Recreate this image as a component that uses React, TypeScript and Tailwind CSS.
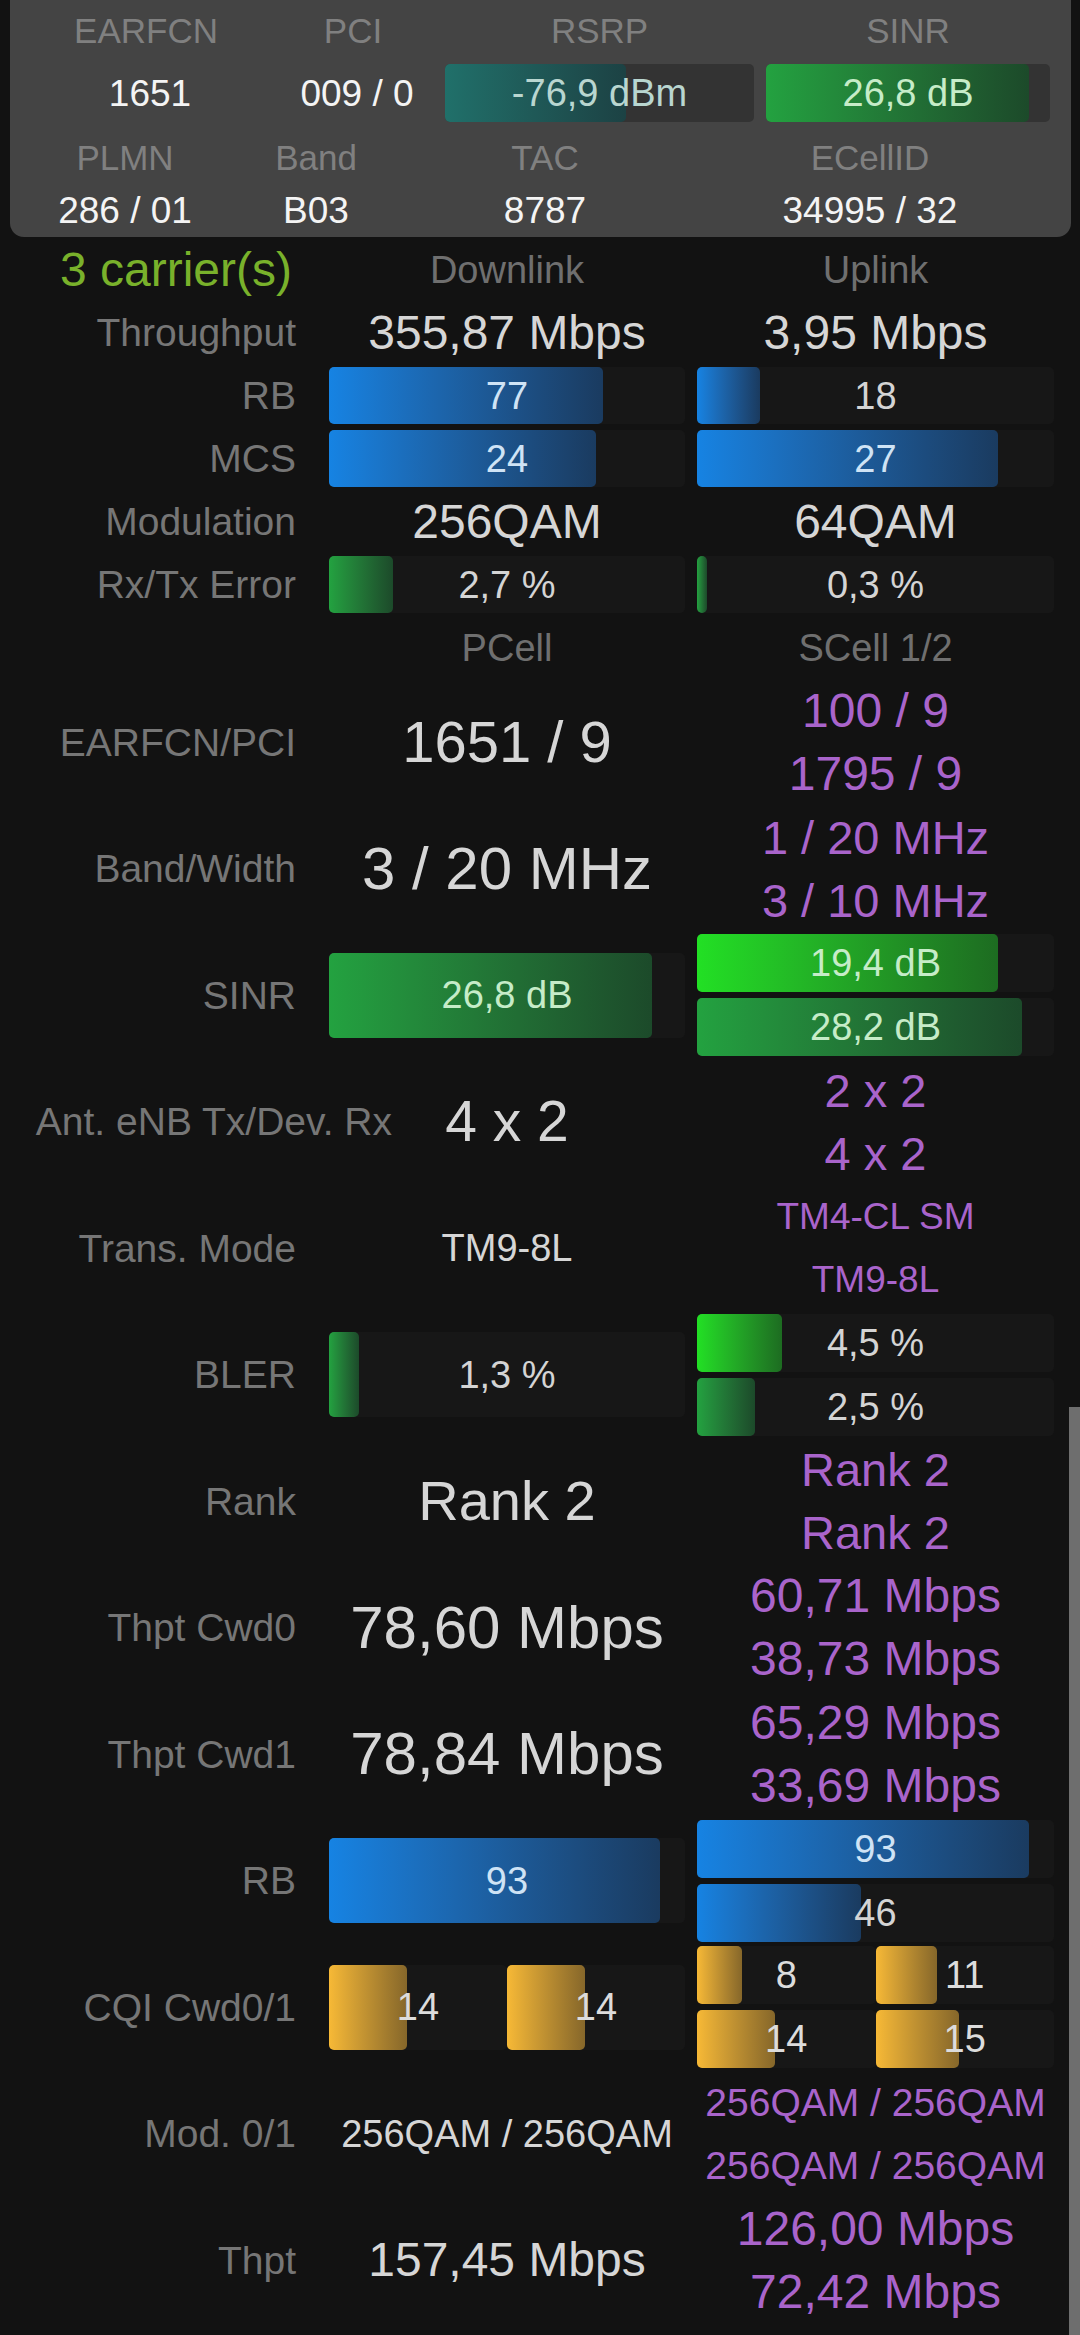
import React from "react";

const BLUE = "bg-linear-to-r from-[#1683e3] to-[#1a3b60]";
const GREEN = "bg-linear-to-r from-[#23a240] to-[#1c4a2a]";
const LIME = "bg-linear-to-r from-[#22e024] to-[#1d6c21]";
const GOLD = "bg-linear-to-r from-[#f7b936] to-[#86672a]";
const TEAL = "bg-linear-to-r from-[#20706a] to-[#1c4244]";

type BarProps = {
  pct: number;
  text: string;
  fill: string;
  h: string;
  tc?: string;
  track?: string;
};

function Bar({ pct, text, fill, h, tc = "text-[#d4d4d4]", track = "bg-[#171717]" }: BarProps) {
  return (
    <div className={`relative flex w-full items-center justify-center rounded-[5px] ${h} ${track}`}>
      <div className={`absolute top-0 left-0 h-full rounded-[5px] ${fill}`} style={{ width: `${pct}%` }} />
      <span className={`relative text-[38px] ${tc}`}>{text}</span>
    </div>
  );
}

// label column + downlink/pcell column + uplink/scell column
function Row({ label, a, b, tall, wide }: { label: React.ReactNode; a?: React.ReactNode; b?: React.ReactNode; tall?: boolean; wide?: boolean }) {
  return (
    <div className={`flex items-center ${tall ? "h-[126.5px]" : "h-[63px]"}`}>
      <div className="flex w-[296px] shrink-0 justify-end text-[39px] text-[#767676]">
        <span className={`whitespace-nowrap ${wide ? "-mr-[96px]" : ""}`}>{label}</span>
      </div>
      <div className="ml-[33px] flex w-[356px] shrink-0 items-center justify-center">{a}</div>
      <div className="ml-[12px] flex w-[357px] shrink-0 items-center justify-center">{b}</div>
    </div>
  );
}

function Pair({ items, size }: { items: string[]; size: string }) {
  return (
    <div className="flex w-full flex-col">
      {items.map((t, i) => (
        <div key={i} className={`flex h-[63px] items-center justify-center whitespace-nowrap text-[#a964cb] ${size}`}>
          {t}
        </div>
      ))}
    </div>
  );
}

function BarPair({ children }: { children: React.ReactNode }) {
  return <div className="flex w-full flex-col gap-[6px]">{children}</div>;
}

function Cqi({ left, right, h }: { left: number; right: number; h: string }) {
  return (
    <div className="grid w-full grid-cols-2">
      <Bar pct={(left / 32) * 100} text={String(left)} fill={GOLD} h={h} tc="text-[#dcdcdc]" />
      <Bar pct={(right / 32) * 100} text={String(right)} fill={GOLD} h={h} tc="text-[#dcdcdc]" />
    </div>
  );
}

const V = "text-[#d6d6d6]";

export default function App() {
  return (
    <div className="relative min-h-[2335px] w-[1080px] overflow-hidden bg-[#121212] font-['Liberation_Sans',Arial,sans-serif] leading-none">
      {/* Top summary panel */}
      <div className="ml-[10px] h-[237px] w-[1061px] rounded-b-[14px] bg-[#444444]">
        <div className="flex h-[60px] items-center text-[35px] text-[#808080]">
          <div className="w-[272px] text-center">EARFCN</div>
          <div className="w-[142px] text-center">PCI</div>
          <div className="ml-[21px] w-[309px] text-center">RSRP</div>
          <div className="ml-[12px] w-[284px] text-center">SINR</div>
        </div>
        <div className="mt-[4px] flex h-[58px] items-center text-[37px] text-[#f4f4f4]">
          <div className="w-[280px] text-center">1651</div>
          <div className="w-[134px] text-center">009 / 0</div>
          <div className="ml-[21px] w-[309px]">
            <Bar pct={58.6} text="-76,9 dBm" fill={TEAL} h="h-[58px]" tc="text-[#b9d6d0]" track="bg-[#333333]" />
          </div>
          <div className="ml-[12px] w-[284px]">
            <Bar pct={92.6} text="26,8 dB" fill={GREEN} h="h-[58px]" tc="text-[#c6ecc8]" track="bg-[#333333]" />
          </div>
        </div>
        <div className="mt-[4px] flex h-[62px] items-center text-[35px] text-[#808080]">
          <div className="w-[230px] text-center">PLMN</div>
          <div className="w-[152px] text-center">Band</div>
          <div className="w-[306px] text-center">TAC</div>
          <div className="w-[344px] text-center">ECellID</div>
        </div>
        <div className="flex h-[44px] items-center text-[37px] text-[#f4f4f4]">
          <div className="w-[230px] text-center">286 / 01</div>
          <div className="w-[152px] text-center">B03</div>
          <div className="w-[306px] text-center">8787</div>
          <div className="w-[344px] text-center">34995 / 32</div>
        </div>
      </div>

      {/* Downlink / Uplink */}
      <div className="pt-[1px]">
        <div className="flex h-[63px] items-center">
          <div className="w-[292px] shrink-0 text-right text-[48px] text-[#79b12b]">3 carrier(s)</div>
          <div className="ml-[37px] w-[356px] shrink-0 text-center text-[38px] text-[#6f6f6f]">Downlink</div>
          <div className="ml-[12px] w-[357px] shrink-0 text-center text-[38px] text-[#6f6f6f]">Uplink</div>
        </div>
        <Row
          label="Throughput"
          a={<span className={`text-[48px] ${V}`}>355,87 Mbps</span>}
          b={<span className={`text-[48px] ${V}`}>3,95 Mbps</span>}
        />
        <Row
          label="RB"
          a={<Bar pct={77} text="77" fill={BLUE} h="h-[57px]" tc="text-[#cfe3f5]" />}
          b={<Bar pct={17.6} text="18" fill={BLUE} h="h-[57px]" />}
        />
        <Row
          label="MCS"
          a={<Bar pct={75} text="24" fill={BLUE} h="h-[57px]" tc="text-[#cfe3f5]" />}
          b={<Bar pct={84.3} text="27" fill={BLUE} h="h-[57px]" tc="text-[#cfe3f5]" />}
        />
        <Row
          label="Modulation"
          a={<span className={`text-[48px] ${V}`}>256QAM</span>}
          b={<span className={`text-[48px] ${V}`}>64QAM</span>}
        />
        <Row
          label="Rx/Tx Error"
          a={<Bar pct={18} text="2,7 %" fill={GREEN} h="h-[57px]" />}
          b={<Bar pct={2.8} text="0,3 %" fill={GREEN} h="h-[57px]" />}
        />
        <Row
          label=""
          a={<span className="text-[38px] text-[#6f6f6f]">PCell</span>}
          b={<span className="text-[38px] text-[#6f6f6f]">SCell 1/2</span>}
        />

        {/* PCell / SCell */}
        <Row tall label="EARFCN/PCI" a={<span className={`text-[58px] ${V}`}>1651 / 9</span>} b={<Pair size="text-[48px]" items={["100 / 9", "1795 / 9"]} />} />
        <Row tall label="Band/Width" a={<span className={`text-[60px] ${V}`}>3 / 20 MHz</span>} b={<Pair size="text-[47px]" items={["1 / 20 MHz", "3 / 10 MHz"]} />} />
        <Row
          tall
          label="SINR"
          a={<Bar pct={90.7} text="26,8 dB" fill={GREEN} h="h-[85px]" tc="text-[#c6ecc8]" />}
          b={
            <BarPair>
              <Bar pct={84.3} text="19,4 dB" fill={LIME} h="h-[58px]" tc="text-[#c6ecc8]" />
              <Bar pct={91} text="28,2 dB" fill={GREEN} h="h-[58px]" tc="text-[#c6ecc8]" />
            </BarPair>
          }
        />
        <Row tall wide label="Ant. eNB Tx/Dev. Rx" a={<span className={`text-[57px] ${V}`}>4 x 2</span>} b={<Pair size="text-[47px]" items={["2 x 2", "4 x 2"]} />} />
        <Row tall label="Trans. Mode" a={<span className={`text-[38px] ${V}`}>TM9-8L</span>} b={<Pair size="text-[37px]" items={["TM4-CL SM", "TM9-8L"]} />} />
        <Row
          tall
          label="BLER"
          a={<Bar pct={8.4} text="1,3 %" fill={GREEN} h="h-[85px]" />}
          b={
            <BarPair>
              <Bar pct={23.8} text="4,5 %" fill={LIME} h="h-[58px]" />
              <Bar pct={16.2} text="2,5 %" fill={GREEN} h="h-[58px]" />
            </BarPair>
          }
        />
        <Row tall label="Rank" a={<span className={`text-[56px] ${V}`}>Rank 2</span>} b={<Pair size="text-[47px]" items={["Rank 2", "Rank 2"]} />} />
        <Row tall label="Thpt Cwd0" a={<span className={`text-[60px] ${V}`}>78,60 Mbps</span>} b={<Pair size="text-[48px]" items={["60,71 Mbps", "38,73 Mbps"]} />} />
        <Row tall label="Thpt Cwd1" a={<span className={`text-[60px] ${V}`}>78,84 Mbps</span>} b={<Pair size="text-[48px]" items={["65,29 Mbps", "33,69 Mbps"]} />} />
        <Row
          tall
          label="RB"
          a={<Bar pct={93} text="93" fill={BLUE} h="h-[85px]" tc="text-[#cfe3f5]" />}
          b={
            <BarPair>
              <Bar pct={93} text="93" fill={BLUE} h="h-[58px]" tc="text-[#cfe3f5]" />
              <Bar pct={46} text="46" fill={BLUE} h="h-[58px]" />
            </BarPair>
          }
        />
        <Row
          tall
          label="CQI Cwd0/1"
          a={<Cqi left={14} right={14} h="h-[85px]" />}
          b={
            <BarPair>
              <Cqi left={8} right={11} h="h-[58px]" />
              <Cqi left={14} right={15} h="h-[58px]" />
            </BarPair>
          }
        />
        <Row tall label="Mod. 0/1" a={<span className={`whitespace-nowrap text-[38px] ${V}`}>256QAM / 256QAM</span>} b={<Pair size="text-[39px]" items={["256QAM / 256QAM", "256QAM / 256QAM"]} />} />
        <Row tall label="Thpt" a={<span className={`text-[48px] ${V}`}>157,45 Mbps</span>} b={<Pair size="text-[48px]" items={["126,00 Mbps", "72,42 Mbps"]} />} />
      </div>

      {/* scrollbar thumb */}
      <div className="absolute top-[1407px] right-0 h-[928px] w-[11px] bg-[#6e6e6e]" />
    </div>
  );
}
